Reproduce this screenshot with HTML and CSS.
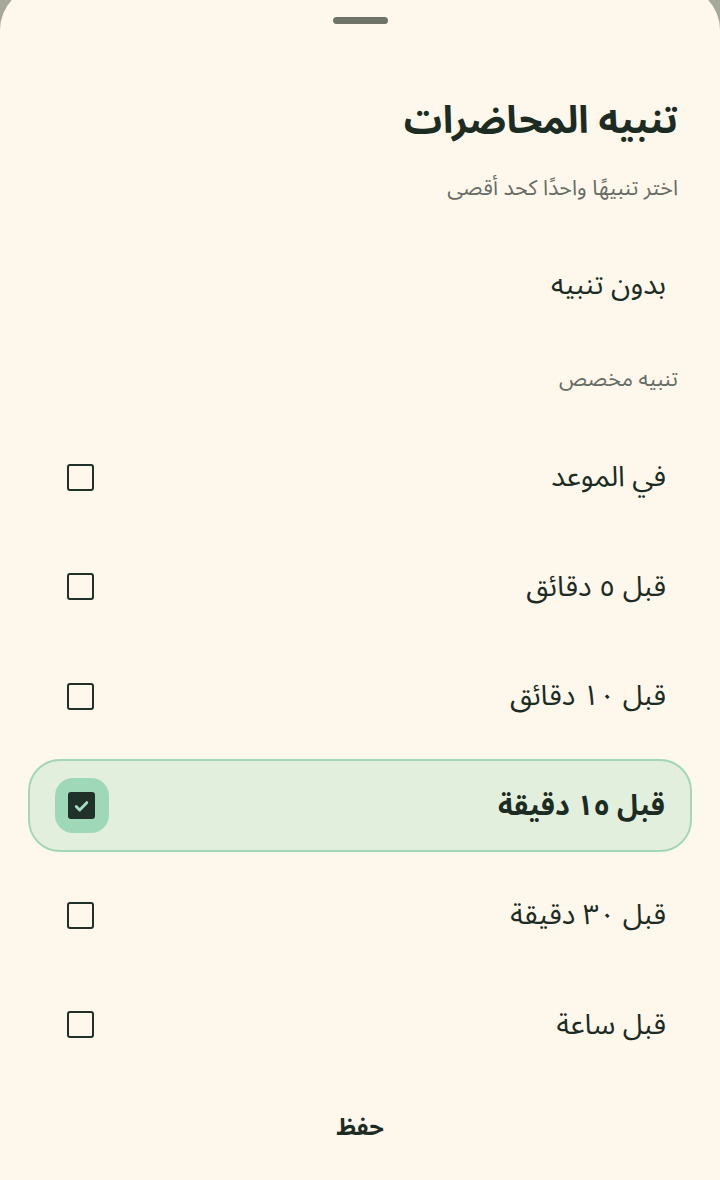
FILE: index.html
```html
<!DOCTYPE html>
<html lang="ar" dir="rtl">
<head>
<meta charset="utf-8">
<title>تنبيه المحاضرات</title>
<link rel="stylesheet" href="styles.css">
</head>
<body>
<div class="sheet">
  <div class="handle"></div>
  <h1 class="title">تنبيه المحاضرات</h1>
  <p class="subtitle">اختر تنبيهًا واحدًا كحد أقصى</p>
  <div class="row row-plain"><span class="label">بدون تنبيه</span></div>
  <p class="section">تنبيه مخصص</p>
  <div class="list">
    <div class="row"><span class="label">في الموعد</span><span class="box-wrap"><span class="box"></span></span></div>
    <div class="row"><span class="label">قبل ٥ دقائق</span><span class="box-wrap"><span class="box"></span></span></div>
    <div class="row"><span class="label">قبل ١٠ دقائق</span><span class="box-wrap"><span class="box"></span></span></div>
    <div class="row row-selected"><span class="label">قبل ١٥ دقيقة</span><span class="box-wrap"><span class="box box-checked"><svg viewBox="0 0 24 24" width="24" height="24"><path d="M6.5 12.5l3.6 3.6L17.5 8.5" fill="none" stroke="#a6dcc2" stroke-width="3" stroke-linecap="round" stroke-linejoin="round"/></svg></span></span></div>
    <div class="row"><span class="label">قبل ٣٠ دقيقة</span><span class="box-wrap"><span class="box"></span></span></div>
    <div class="row"><span class="label">قبل ساعة</span><span class="box-wrap"><span class="box"></span></span></div>
  </div>
  <div class="footer"><button class="save">حفظ</button></div>
</div>
</body>
</html>
```
FILE: styles.css
```css
html, body {
  margin: 0;
  padding: 0;
  background: #a6a899;
  height: 1180px;
  overflow: hidden;
}
body {
  font-family: "Noto Sans Arabic", "Noto Kufi Arabic", "Noto Naskh Arabic", "DejaVu Sans", sans-serif;
  color: #1b2b22;
}
.sheet {
  margin-top: -14px;
  background: #fef8ec;
  border-radius: 44px 44px 0 0;
  height: 1194px;
  display: flex;
  flex-direction: column;
  padding: 0 28px;
  box-sizing: border-box;
}
.handle {
  align-self: center;
  width: 55px;
  height: 7px;
  border-radius: 4px;
  background: #6f746b;
  margin-top: 31px;
}
.title {
  margin: 73px 14px 0 0;
  font-size: 38px;
  font-weight: 700;
  line-height: 48px;
  height: 48px;
  color: #1c2c23;
}
.subtitle {
  margin: 30px 14px 0 0;
  font-size: 21.4px;
  line-height: 28px;
  height: 28px;
  color: #676c64;
}
.section {
  margin: 35px 14px 0 0;
  font-size: 21.4px;
  line-height: 28px;
  height: 28px;
  color: #676c64;
}
.row {
  height: 93px;
  box-sizing: border-box;
  display: flex;
  align-items: center;
  justify-content: space-between;
  padding: 0 25px 0 24.5px;
  border: 1.5px solid transparent;
  border-radius: 32px;
}
.row-plain {
  margin-top: 35px;
}
.label {
  font-size: 28.5px;
  line-height: 40px;
  color: #1c2c23;
}
.list {
  margin-top: 36.5px;
  display: flex;
  flex-direction: column;
  gap: 16.5px;
}
.row-selected {
  background: #e2efdc;
  border: 2px solid #a3d7b5;
}
.row-selected .label {
  font-weight: 700;
}
.box-wrap {
  width: 54px;
  height: 55px;
  display: flex;
  align-items: center;
  justify-content: center;
  border-radius: 18px;
}
.row-selected .box-wrap {
  background: #9fd8b9;
}
.box {
  width: 27px;
  height: 27px;
  box-sizing: border-box;
  border: 2.6px solid #1f3128;
  border-radius: 3px;
  display: flex;
  align-items: center;
  justify-content: center;
}
.box-checked {
  background: #1f3128;
}
.footer {
  margin-top: 33px;
  display: flex;
  justify-content: center;
}
.save {
  font-family: inherit;
  background: none;
  border: none;
  font-size: 23.5px;
  font-weight: 700;
  line-height: 48px;
  height: 48px;
  padding: 0 24px;
  color: #1c2c23;
}
```
